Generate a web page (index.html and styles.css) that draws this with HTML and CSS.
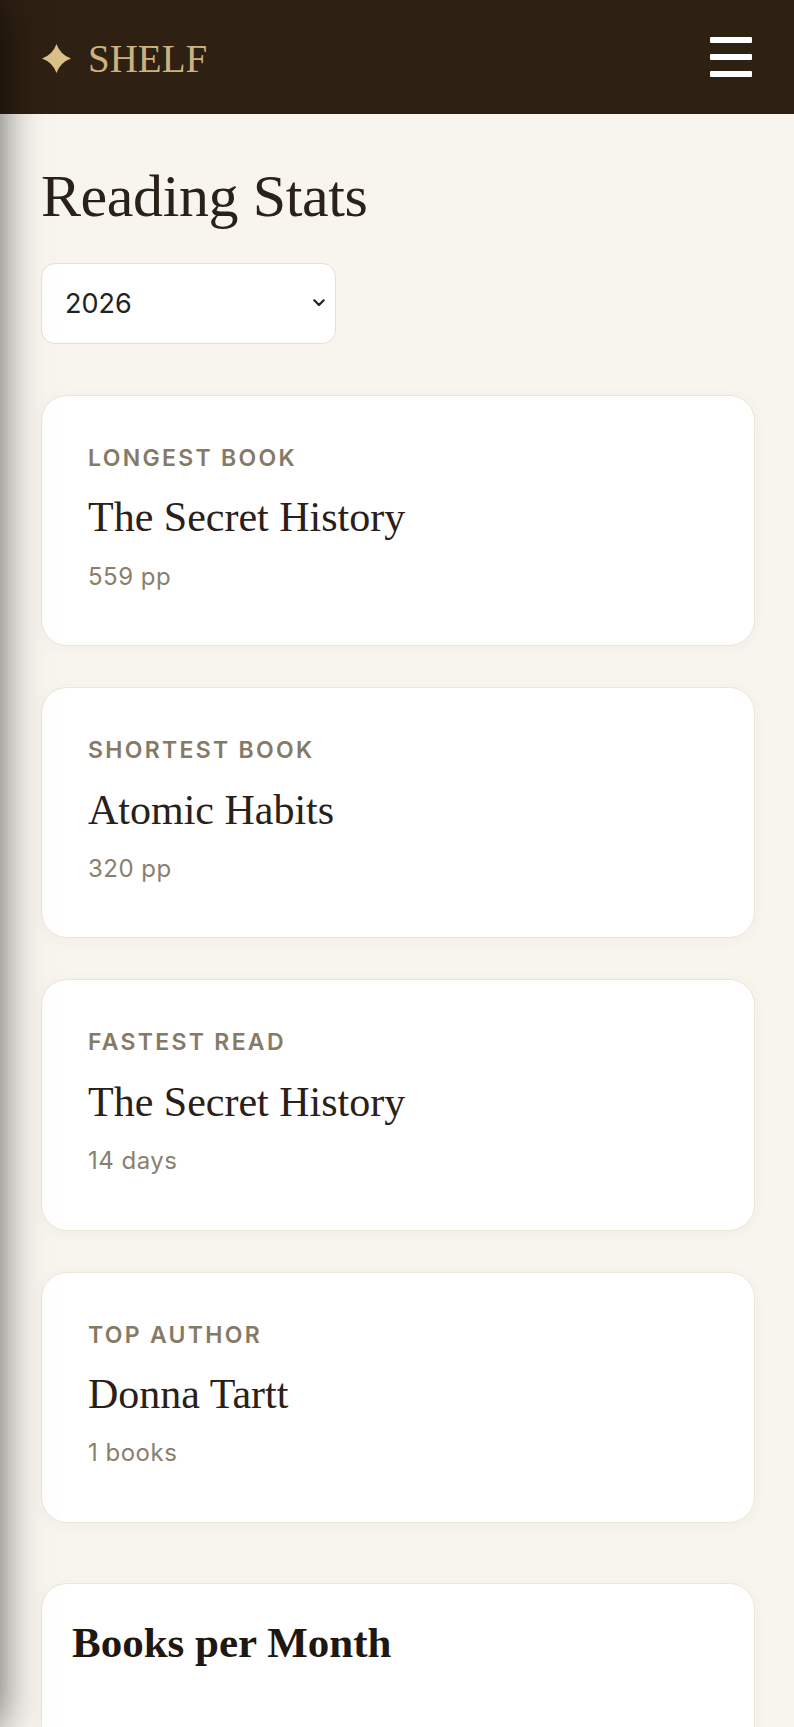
FILE: index.html
```html
<!DOCTYPE html>
<html lang="en">
<head>
<meta charset="utf-8">
<title>Reading Stats – Shelf</title>
<link rel="stylesheet" href="styles.css">
</head>
<body>
<aside class="drawer" aria-hidden="true"></aside>
<header class="topbar">
  <a class="brand" href="#">
    <svg class="brand-star" width="29" height="29" viewBox="0 0 29 29" aria-hidden="true"><path d="M14.5 0 Q18.3 10.7 29 14.5 Q18.3 18.3 14.5 29 Q10.7 18.3 0 14.5 Q10.7 10.7 14.5 0Z"/></svg>
    <span class="brand-name">SHELF</span>
  </a>
  <button class="menu-btn" aria-label="Menu">
    <svg width="42" height="40" viewBox="0 0 42 40" aria-hidden="true"><rect x="0" y="0" width="42" height="6" rx="1"/><rect x="0" y="17" width="42" height="6" rx="1"/><rect x="0" y="34" width="42" height="6" rx="1"/></svg>
  </button>
</header>
<main class="page">
  <h1 class="page-title">Reading Stats</h1>
  <div class="year-select">
    <select class="year-select__input">
      <option>2026</option>
      <option>2025</option>
      <option>2024</option>
    </select>
    <svg class="year-select__chevron" width="12" height="8" viewBox="0 0 12 8" aria-hidden="true"><path d="M1.3 1.3 L6 6 L10.7 1.3"/></svg>
  </div>
  <section class="stats">
    <article class="stat-card">
      <div class="stat-label">LONGEST BOOK</div>
      <div class="stat-value">The Secret History</div>
      <div class="stat-meta">559 pp</div>
    </article>
    <article class="stat-card">
      <div class="stat-label">SHORTEST BOOK</div>
      <div class="stat-value">Atomic Habits</div>
      <div class="stat-meta">320 pp</div>
    </article>
    <article class="stat-card">
      <div class="stat-label">FASTEST READ</div>
      <div class="stat-value">The Secret History</div>
      <div class="stat-meta">14 days</div>
    </article>
    <article class="stat-card">
      <div class="stat-label">TOP AUTHOR</div>
      <div class="stat-value">Donna Tartt</div>
      <div class="stat-meta">1 books</div>
    </article>
  </section>
  <section class="chart-card">
    <h2 class="chart-title">Books per Month</h2>
    <div class="chart-body"></div>
  </section>
</main>
</body>
</html>
```
FILE: styles.css
```css
* { box-sizing: border-box; }
html, body { margin: 0; padding: 0; }
body {
  background: #f8f5ef;
  color: #2a2018;
  font-family: "Inter", "Liberation Sans", sans-serif;
}
.drawer {
  position: fixed;
  top: 0;
  left: 0;
  width: 280px;
  height: 100%;
  background: #2e2012;
  transform: translateX(-100%);
  box-shadow: 0 0 40px rgba(0, 0, 0, 0.62);
  z-index: 10;
}
.topbar {
  height: 114px;
  background: #2e2012;
  display: flex;
  align-items: center;
  justify-content: space-between;
  padding: 0 42px;
}
.brand {
  display: flex;
  align-items: center;
  gap: 17px;
  text-decoration: none;
  margin-top: 2px;
}
.brand-star { fill: #dcc089; display: block; }
.brand-name {
  font-family: "Liberation Serif", serif;
  font-size: 39px;
  line-height: 1;
  color: #cdb27f;
  letter-spacing: 0;
}
.menu-btn {
  background: none;
  border: 0;
  padding: 0;
  display: block;
  cursor: pointer;
}
.menu-btn svg { display: block; fill: #ffffff; }
.page {
  padding: 46px 39px 0 41px;
}
.page-title {
  margin: 0;
  font-family: "Liberation Serif", serif;
  font-weight: 400;
  font-size: 60px;
  line-height: 72px;
  letter-spacing: -0.4px;
  color: #2a2118;
}
.year-select {
  position: relative;
  width: 295px;
  margin-top: 31px;
}
.year-select__input {
  appearance: none;
  -webkit-appearance: none;
  width: 100%;
  height: 81px;
  padding: 0 40px 0 23px;
  border: 1px solid #e6e0d4;
  border-radius: 14px;
  background: #ffffff;
  font-family: "Inter", "Liberation Sans", sans-serif;
  font-size: 27px;
  color: #222222;
}
.year-select__chevron {
  position: absolute;
  right: 11px;
  top: 36px;
  fill: none;
  stroke: #222222;
  stroke-width: 2.2;
  stroke-linecap: round;
  stroke-linejoin: round;
  pointer-events: none;
}
.stats {
  margin-top: 51px;
  display: flex;
  flex-direction: column;
  gap: 41px;
}
.stat-card {
  background: #ffffff;
  border: 1px solid #ece6da;
  border-radius: 26px;
  padding: 49px 46px 55px;
  box-shadow: 0 2px 14px rgba(80, 60, 30, 0.04);
}
.stat-label {
  font-size: 23px;
  line-height: 26.4px;
  font-weight: 600;
  letter-spacing: 2.3px;
  color: #857a66;
}
.stat-value {
  margin-top: 22px;
  font-family: "Liberation Serif", serif;
  font-size: 42px;
  line-height: 49.2px;
  color: #2a2018;
}
.stat-meta {
  margin-top: 20px;
  font-size: 24px;
  line-height: 27.6px;
  letter-spacing: 0.5px;
  color: #8a7f6c;
}
.chart-card {
  margin-top: 60px;
  background: #ffffff;
  border: 1px solid #ece6da;
  border-radius: 26px;
  padding: 34px 30px 40px;
  box-shadow: 0 2px 14px rgba(80, 60, 30, 0.04);
}
.chart-title {
  margin: 0;
  font-family: "Liberation Serif", serif;
  font-weight: 700;
  font-size: 43px;
  line-height: 50.4px;
  letter-spacing: 0;
  color: #1f1810;
}
.chart-body {
  height: 320px;
}
```
